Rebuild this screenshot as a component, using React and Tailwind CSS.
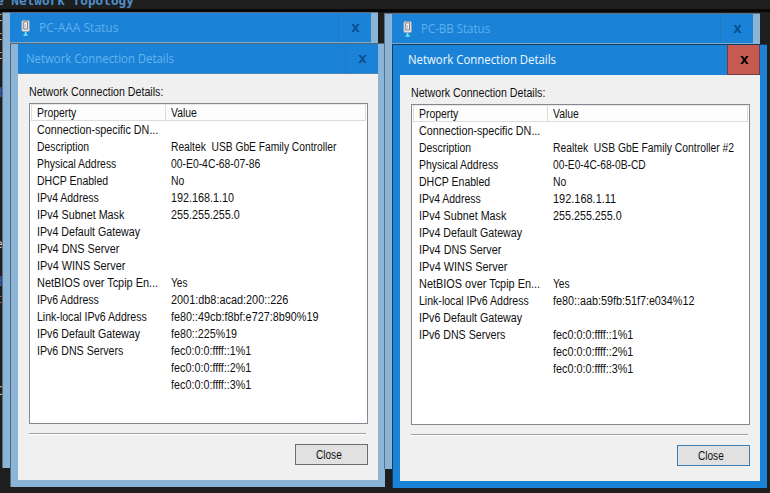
import { useLayoutEffect, useRef, useState } from "react";

// Text stretched or condensed horizontally to a given width.
function Fit({ w, children, className = "" }) {
  const ref = useRef(null);
  const [scale, setScale] = useState(1);
  useLayoutEffect(() => {
    setScale(w / ref.current.offsetWidth);
  }, [w, children]);
  return (
    <span ref={ref} className={`inline-block origin-left whitespace-pre ${className}`} style={{ transform: `scaleX(${scale})` }}>
      {children}
    </span>
  );
}

function Adapter() {
  return (
    <svg width="10" height="16" viewBox="0 0 10 16" className="block">
      <rect x="0.8" y="0.5" width="7.6" height="11" rx="1.2" fill="#e3e6e8" stroke="#93a1ac" strokeWidth="0.8" />
      <rect x="2.8" y="1.8" width="3.6" height="7.2" fill="#faf6f1" stroke="#6a6a70" strokeWidth="0.8" />
      <path d="M4.6 4v3.6" stroke="#b0a6a0" strokeWidth="0.8" />
      <path d="M4.6 11.8v3" stroke="#6ff3f6" strokeWidth="1.6" />
      <path d="M2.6 15h4" stroke="#6ff3f6" strokeWidth="1.4" />
    </svg>
  );
}

function Cross({ color }) {
  return (
    <svg width="9" height="8" viewBox="0 0 9 8" className="block">
      <path d="M0.4 0h2.4l1.7 2.6L6.2 0h2.4L5.7 4l2.9 4H6.2L4.5 5.4L2.8 8H0.4L3.3 4z" fill={color} />
    </svg>
  );
}

const common = [
  ["Connection-specific DN...", 121],
  ["Description", 52],
  ["Physical Address", 79],
  ["DHCP Enabled", 71],
  ["IPv4 Address", 62],
  ["IPv4 Subnet Mask", 87],
  ["IPv4 Default Gateway", 103],
  ["IPv4 DNS Server", 82],
  ["IPv4 WINS Server", 88],
  ["NetBIOS over Tcpip En...", 121],
];
const dns = [
  ["fec0:0:0:ffff::1%1", 80],
  ["fec0:0:0:ffff::2%1", 80],
  ["fec0:0:0:ffff::3%1", 80],
];

function rows(values, tail) {
  return [...common.map((p, i) => [p, values[i]]), ...tail];
}

const rowsA = rows(
  [null, ["Realtek  USB GbE Family Controller", 165], ["00-E0-4C-68-07-86", 89], ["No", 13], ["192.168.1.10", 63], ["255.255.255.0", 69], null, null, null, ["Yes", 17]],
  [
    [["IPv6 Address", 62], ["2001:db8:acad:200::226", 117]],
    [["Link-local IPv6 Address", 110], ["fe80::49cb:f8bf:e727:8b90%19", 147]],
    [["IPv6 Default Gateway", 103], ["fe80::225%19", 66]],
    [["IPv6 DNS Servers", 86], dns[0]],
    [null, dns[1]],
    [null, dns[2]],
  ]
);
const rowsB = rows(
  [null, ["Realtek  USB GbE Family Controller #2", 181], ["00-E0-4C-68-0B-CD", 93], ["No", 13], ["192.168.1.11", 63], ["255.255.255.0", 69], null, null, null, ["Yes", 17]],
  [
    [["Link-local IPv6 Address", 110], ["fe80::aab:59fb:51f7:e034%12", 141]],
    [["IPv6 Default Gateway", 103], null],
    [["IPv6 DNS Servers", 86], dns[0]],
    [null, dns[1]],
    [null, dns[2]],
  ]
);

function Cell({ t }) {
  return t ? <Fit w={t[1]}>{t[0]}</Fit> : null;
}

function StatusWindow({ title, w, pos }) {
  return (
    <div className={`absolute flex h-[456px] w-[376px] flex-col border-l border-t border-[#5d6f80] bg-[#8cb4d6] ${pos}`}>
      <div className="ml-[7px] mr-[7px] flex h-[30px] items-center border-b border-[#7fa9cb] bg-[#1a83d8]">
        <div className="ml-[11px]"><Adapter /></div>
        <div className="ml-2 flex-1 pt-px text-[12px] text-[#5fb0ee]"><Fit w={w}>{title}</Fit></div>
        <div className="flex h-full w-[33px] items-center justify-center border-l border-[#2379be]">
          <Cross color="#0c4f8c" />
        </div>
      </div>
    </div>
  );
}

function DetailsWindow({ active, data, pos }) {
  return (
    <div className={`absolute flex h-[444px] w-[375px] flex-col border-l border-t pb-[7px] pl-[7px] pr-[7px] ${active ? "border-[#113b62] bg-[#1a83d8]" : "border-[#54687a] bg-[#8cb4d6]"} ${pos}`}>
      <div className={`flex h-[30px] shrink-0 items-center bg-[#1a83d8] ${active ? "" : "border-b border-[#4a83b0]"}`}>
        <div className={`ml-2 flex-1 text-[13px] ${active ? "text-[#f2f8fd]" : "text-[#66b3ee]"}`}>
          <Fit w={148}>Network Connection Details</Fit>
        </div>
        <div className={`flex h-full w-[33px] items-center justify-center ${active ? "border-x border-b border-[#713c46] bg-[#c55a50] pl-px" : "border-l border-[#2379be]"}`}>
          <Cross color={active ? "#000000" : "#0c4f8c"} />
        </div>
      </div>
      <div className="flex flex-1 flex-col bg-[#f0f0f0] pl-[11px] pr-[10px] font-['Liberation_Sans',Arial,sans-serif] text-[12px] leading-[17px] text-[#101010]">
        <div className="mt-[10px] h-[17px]"><Fit w={134}>Network Connection Details:</Fit></div>
        <div className="mt-[2px] h-[321px] border border-[#828790] bg-white px-px">
          <div className="flex h-[17px] border border-t-[#e8e8e8] border-[#dcdcdc] bg-[#fdfdfd] leading-[17px]">
            <div className="w-[134px] border-r border-[#dcdcdc] pl-[5px]"><Fit w={39}>Property</Fit></div>
            <div className="pl-[5px]"><Fit w={26}>Value</Fit></div>
          </div>
          {data.map(([p, v], i) => (
            <div key={i} className="flex h-[17px] leading-[19px]">
              <div className="w-[134px] shrink-0 pl-[6px]"><Cell t={p} /></div>
              <div className="pl-[6px]"><Cell t={v} /></div>
            </div>
          ))}
        </div>
        <div className="mr-[2px] mt-[9px] h-[2px] border-b border-t border-b-white border-t-[#a0a0a0]" />
        <div className={`mt-[9px] flex h-[21px] w-[73px] items-center justify-center self-end border bg-[#e1e1e1] pt-px ${active ? "border-[#3b7fb4]" : "border-[#6d6d6d]"}`}>
          <Fit w={26}>Close</Fit>
        </div>
      </div>
    </div>
  );
}

// Slivers of the editor's text that show left of the windows.
const slivers = [
  ["t", "top-[8px] text-[#d2cb98]"],
  ["t", "top-[27px] text-[#d2cb98]"],
  ["t", "top-[46px] text-[#d2cb98]"],
  ["d", "top-[84px] text-[#3c62c8]"],
  ["e", "top-[235px] text-[#c8c8c8]"],
  ["d", "top-[273px] text-[#3c62c8]"],
  ["t", "top-[290px] text-[#b0705c]"],
  ["C", "top-[382px] text-[#c8c8c8]"],
];

export default function App() {
  return (
    <div className="relative h-[493px] w-[770px] overflow-hidden bg-[#1e1e1e] font-['Open_Sans','Noto_Sans',sans-serif]">
      <div className="absolute -left-[4px] -top-[8px] font-['DejaVu_Sans_Mono',monospace] text-[13px] font-bold leading-[18px] text-[#4f8fc8]">
        <Fit w={138}>e Network Topology</Fit>
      </div>
      <div className="absolute left-0 top-[9px] h-[3px] w-full bg-[#080808]" />
      {slivers.map(([ch, cls], i) => (
        <div key={i} className={`absolute -left-[5px] font-['DejaVu_Sans_Mono',monospace] text-[13px] leading-[18px] ${cls}`}>{ch}</div>
      ))}
      <div className="absolute -left-[6px] top-[433px] font-['DejaVu_Sans_Mono',monospace] text-[13px] leading-[18px] text-[#a8a8a8]">|]</div>
      <StatusWindow title="PC-AAA Status" w={79} pos="left-[2px] top-[12px]" />
      <DetailsWindow data={rowsA} pos="left-[10px] top-[43px]" />
      <StatusWindow title="PC-BB Status" w={69} pos="left-[384px] top-[13px]" />
      <DetailsWindow active data={rowsB} pos="left-[392px] top-[44px]" />
    </div>
  );
}
